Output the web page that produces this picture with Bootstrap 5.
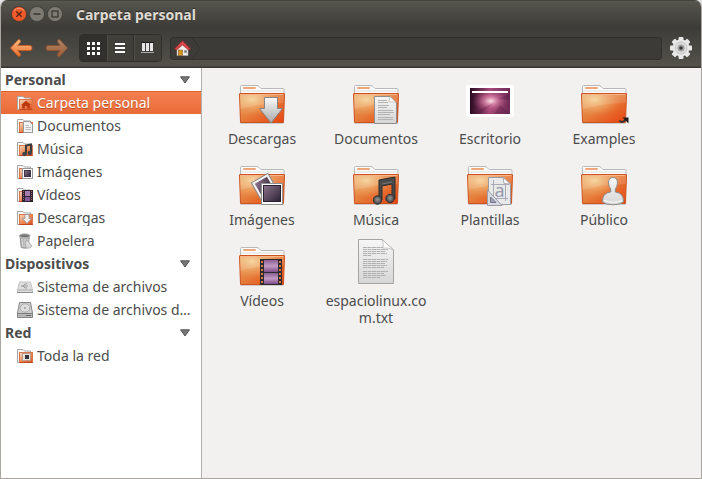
<!DOCTYPE html>
<html lang="es">
<head>
<meta charset="utf-8">
<meta name="viewport" content="width=device-width, initial-scale=1">
<title>Carpeta personal</title>
<link rel="stylesheet" href="https://cdn.jsdelivr.net/npm/bootstrap@5.3.0/dist/css/bootstrap.min.css">
<style>
body { background: #e4e4e4; color: #4c4c4c; font: 14px/17px "Noto Sans", "Open Sans", sans-serif; }
.window { border: 1px solid #a9a5a0; border-top: 0; border-radius: 7px 7px 0 0; overflow: hidden; background: #f2f1f0; }
.chrome { margin: 0 -1px; background: linear-gradient(#2f2e2a 0, #5b5a53 1px, #54534c 3px, #3c3b37 28px, #3e3d39 29px, #53514a 66px, #36352f 67px); }
.titlebar { height: 28px; padding: 0 11px; gap: 2px; }
.titlebar h1 { color: #dfdbd2; font-size: 14px; line-height: 17px; padding-left: 11px; text-shadow: 0 -1px #2c2b28; }
.window button { border: 0; padding: 0; background: none; color: inherit; }
.window svg { display: block; flex: none; }
.toolbar { height: 40px; padding: 0 10px 0 9px; }
.history { gap: 12px; margin-right: 10px; }
.window .views { border: 1px solid #2f2e2b; border-radius: 4px; overflow: hidden; }
.window .views button { width: 27px; height: 26px; background: #403f3a; border-left: 1px solid #504e48; }
.window .views button + button { box-shadow: -1px 0 #2f2e2b; }
.window .views button.active { background: #31302d; border-left-color: #31302d; }
.pathbar { height: 23px; border: 1px solid #30302c; border-radius: 3px; background: #3c3b37; box-shadow: 0 1px #56544c; padding-left: 3px; gap: 1px; }
.places { width: 201px; background: #fff; border-right: 1px solid #b4b0ac; }
.places h2 { font-size: 14px; line-height: 17px; height: 23px; padding: 0 11px 0 4px; margin: 0; }
.places a { height: 23px; padding: 0 4px 0 16px; gap: 4px; color: inherit; }
.places a.active { color: #fff; background: linear-gradient(#f58052, #e86b38); box-shadow: inset 0 1px #e0612e; text-shadow: 0 1px #b9522a; }
.files { display: grid; grid-template-columns: repeat(auto-fill, 114px); align-content: start; row-gap: 11px; padding: 9px 3px; }
.files a { color: inherit; gap: 5px; padding: 0 4px; }
.files span { max-width: 106px; word-break: break-all; }
</style>
<script src="https://cdn.jsdelivr.net/npm/bootstrap@5.3.0/dist/js/bootstrap.bundle.min.js"></script>
</head>
<body>
<svg width="0" height="0" class="position-absolute" aria-hidden="true">
  <defs>
    <linearGradient id="gBody" x1="0" y1="0" x2="1" y2="1"><stop offset="0" stop-color="#e9a766"/><stop offset=".45" stop-color="#e5803d"/><stop offset="1" stop-color="#e8420f"/></linearGradient>
    <radialGradient id="gGlow" cx=".28" cy=".2" r=".6"><stop offset="0" stop-color="#f8dba0" stop-opacity=".85"/><stop offset="1" stop-color="#f3a868" stop-opacity="0"/></radialGradient>
    <linearGradient id="gPaper" x1="0" y1="0" x2="0" y2="1"><stop offset="0" stop-color="#f6f6f6"/><stop offset="1" stop-color="#d6d6d6"/></linearGradient>
    <linearGradient id="gMetal" x1="0" y1="0" x2="0" y2="1"><stop offset="0" stop-color="#fafafa"/><stop offset="1" stop-color="#a9a9a9"/></linearGradient>
    <linearGradient id="gPhoto" x1="0" y1="0" x2="1" y2="1"><stop offset="0" stop-color="#8d748c"/><stop offset="1" stop-color="#2b2133"/></linearGradient>
    <linearGradient id="gFilm" x1="0" y1="0" x2="0" y2="1"><stop offset="0" stop-color="#8a5f92"/><stop offset=".5" stop-color="#c39ac4"/><stop offset="1" stop-color="#7c4c88"/></linearGradient>
    <linearGradient id="gSmall" x1="0" y1="0" x2="1" y2="1"><stop offset="0" stop-color="#f9dcc4"/><stop offset=".5" stop-color="#ec8c58"/><stop offset="1" stop-color="#dc4a1c"/></linearGradient>
    <linearGradient id="gArrow" x1="0" y1="0" x2="0" y2="1"><stop offset="0" stop-color="#fbc08a"/><stop offset="1" stop-color="#ec6a28"/></linearGradient>
    <linearGradient id="gWall" x1="0" y1="0" x2="1" y2="0"><stop offset="0" stop-color="#2a0a20"/><stop offset=".5" stop-color="#a8487a"/><stop offset="1" stop-color="#6d2a55"/></linearGradient>
    <radialGradient id="gShine" cx=".52" cy=".5" r=".45"><stop offset="0" stop-color="#fbe3e8"/><stop offset=".4" stop-color="#dd86a9" stop-opacity=".7"/><stop offset="1" stop-color="#a04070" stop-opacity="0"/></radialGradient>
    <radialGradient id="gBall" cx=".5" cy=".45" r=".5"><stop offset="0" stop-color="#999"/><stop offset="1" stop-color="#444"/></radialGradient>
  </defs>
  <symbol id="folder" viewBox="0 0 48 48">
    <rect x="2" y="44" width="44" height="3" rx="1" fill="#000" opacity=".15"/>
    <path d="M2.500 18V9.500q0-1 1-1H19q1 0 2 1l2 2H45q1 0 1 1V18z" fill="#fbfbfb" stroke="#b9b9b9"/>
    <rect x="5" y="10" width="13" height="2" rx="1" fill="#efa678"/>
    <path d="M3 14H45" stroke="#dedede"/>
    <path d="M1.500 17q0-.5.5-.5H46q.5 0 .5.5L45.500 45q0 .5-.5.5H3q-.5 0-.5-.5z" fill="url(#gBody)" stroke="#cd5220"/>
    <path d="M2 17H46L45 45H3z" fill="url(#gGlow)"/>
    <path d="M2.500 17.500H45.500" stroke="#f5b88c"/>
    <path d="M2 18H46L45.700 26Q24 26 2.400 32z" fill="#fff" opacity=".12"/>
  </symbol>
  <symbol id="place" viewBox="0 0 16 16">
    <path d="M.5 14.500V1.500H6L7.500 3H13.500V6H3V14.500z" fill="#f9f9f9" stroke="#a5a5a5"/>
    <rect x="2.500" y="4.500" width="13" height="10" fill="url(#gSmall)" stroke="#d9764c"/>
    <path d="M2.500 14.500H15.500" stroke="#c4451a"/>
  </symbol>
  <symbol id="tri" viewBox="0 0 10 8"><path d="M.5 .8H9.500L5 7z" fill="#777" stroke="#555"/></symbol>
</svg>

<div class="window d-flex flex-column min-vh-100">
  <header class="chrome">
    <div class="titlebar d-flex align-items-center">
      <button type="button" aria-label="Cerrar"><svg width="16" height="16" viewBox="0 0 16 16"><circle cx="8" cy="8" r="7.500" fill="#ee5a2a" stroke="#2e2d29" stroke-width=".6"/><path d="M3 4.500Q8 0 13 4.500" fill="none" stroke="#f79a75"/><path d="M5.300 5.500L10.700 10.700M10.700 5.500L5.300 10.700" stroke="#5a2413" stroke-width="1.300"/></svg></button>
      <button type="button" aria-label="Minimizar"><svg width="16" height="16" viewBox="0 0 16 16"><circle cx="8" cy="8" r="7.500" fill="#7c7a72" stroke="#33322e" stroke-width=".6"/><path d="M4.500 8H11.500" stroke="#34332f" stroke-width="1.400"/></svg></button>
      <button type="button" aria-label="Maximizar"><svg width="16" height="16" viewBox="0 0 16 16"><circle cx="8" cy="8" r="7.500" fill="#7c7a72" stroke="#33322e" stroke-width=".6"/><rect x="5" y="5" width="6" height="6" fill="none" stroke="#34332f" stroke-width="1.200"/></svg></button>
      <h1 class="fw-bold mb-0">Carpeta personal</h1>
    </div>
    <div class="toolbar d-flex align-items-center">
      <div class="history d-flex">
        <button type="button" aria-label="Atrás"><svg width="24" height="20" viewBox="0 0 24 20"><path d="M1.500 10L9.500 1.500Q12 1.500 11.500 4L8.700 7.500H21Q23 7.500 23 10T21 12.500H8.700L11.500 16Q12 18.500 9.500 18.500z" fill="url(#gArrow)" stroke="#c95a20" stroke-width=".8"/></svg></button>
        <button type="button" aria-label="Adelante" disabled><svg width="24" height="20" viewBox="0 0 24 20" opacity=".55"><path d="M22.500 10L14.500 1.500Q12 1.500 12.500 4L15.300 7.500H3Q1 7.500 1 10T3 12.500H15.300L12.500 16Q12 18.500 14.500 18.500z" fill="url(#gArrow)" stroke="#c95a20" stroke-width=".8"/></svg></button>
      </div>
      <div class="views d-flex me-2" role="group" aria-label="Vista">
        <button type="button" class="active" aria-label="Iconos"><svg class="mx-auto" width="14" height="14" viewBox="0 0 14 14" fill="#fff"><path d="M0 1h3v3H0zM5 1h3v3H5zM10 1h3v3h-3zM0 6h3v3H0zM5 6h3v3H5zM10 6h3v3h-3zM0 11h3v3H0zM5 11h3v3H5zM10 11h3v3h-3z"/></svg></button>
        <button type="button" aria-label="Lista"><svg class="mx-auto" width="12" height="12" viewBox="0 0 12 12" fill="#fff"><path d="M0 1h10v2H0zM0 5h10v2H0zM0 9h10v2H0z"/></svg></button>
        <button type="button" aria-label="Compacta"><svg class="mx-auto" width="14" height="12" viewBox="0 0 14 12"><path d="M0 .5h13" stroke="#1d1c1a"/><path d="M1 1h3v8H1zM5 1h3v8H5zM9 1h3v8H9z" fill="#e6e6e6"/><path d="M0 10.500h13" stroke="#aaa"/></svg></button>
      </div>
      <nav class="pathbar d-flex align-items-center flex-grow-1 me-2" aria-label="Ruta">
        <a href="#" aria-label="Carpeta personal"><svg width="17" height="17" viewBox="0 0 17 17"><path d="M3 8L8.500 3L14 8V15.500H3z" fill="#f1efed" stroke="#aaa" stroke-width=".6"/><path d="M.5 9L8.500 .8L16.500 9L14.500 10L8.500 5L2.500 10z" fill="#d8474a" stroke="#a1282d" stroke-width=".7"/><rect x="4.500" y="10" width="4" height="5.500" fill="#d9941e" stroke="#805a1c" stroke-width=".6"/><rect x="10" y="10" width="3" height="3" fill="#777" stroke="#ddd" stroke-width=".6"/></svg></a>
        <svg width="10" height="21" viewBox="0 0 10 21" fill="none"><path d="M1 0L8.500 10.500L1 21" stroke="#302f2c"/><path d="M2 0L9.500 10.500L2 21" stroke="#474640" stroke-width=".7"/></svg>
      </nav>
      <button type="button" aria-label="Opciones"><svg width="22" height="22" viewBox="0 0 22 22"><g fill="#e8e8e8"><rect x="8.500" y="0" width="5" height="22" rx="1"/><rect x="0" y="8.500" width="22" height="5" rx="1"/><rect x="8.500" y="0" width="5" height="22" rx="1" transform="rotate(45 11 11)"/><rect x="8.500" y="0" width="5" height="22" rx="1" transform="rotate(-45 11 11)"/><circle cx="11" cy="11" r="8.500"/></g><circle cx="11" cy="11" r="6" fill="#dcdcdc" stroke="#c6c6c6"/><circle cx="11" cy="11" r="3.500" fill="#a2a2a2"/><circle cx="11" cy="11" r="1.800" fill="#3d3c38"/></svg></button>
    </div>
  </header>

  <div class="d-flex flex-grow-1">
    <nav class="places flex-shrink-0" aria-label="Lugares">
      <h2 class="fw-bold d-flex align-items-center justify-content-between">Personal <svg width="10" height="8"><use href="#tri"/></svg></h2>
      <a href="#" class="active d-flex align-items-center text-decoration-none" aria-current="page"><svg width="16" height="16"><use href="#place"/><path d="M4 10L9 5.800L14 10H12.800V13.500H10.200V11H7.800V13.500H5.200V10z" fill="#bd3810"/></svg><span class="text-truncate">Carpeta personal</span></a>
      <a href="#" class="d-flex align-items-center text-decoration-none"><svg width="16" height="16"><use href="#place"/><path d="M6.500 3.500H12.500L15.500 6.500V14.500H6.500z" fill="#f3f3f3" stroke="#999"/><path d="M8.500 7.500H12M8.500 9.500H14M8.500 11.500H14" stroke="#bbb"/></svg><span class="text-truncate">Documentos</span></a>
      <a href="#" class="d-flex align-items-center text-decoration-none"><svg width="16" height="16"><use href="#place"/><path d="M9 13V4.500L14 3.500V12" fill="none" stroke="#3b3b3b" stroke-width="2"/><circle cx="7.500" cy="13" r="2.200" fill="#444"/><circle cx="12.800" cy="12" r="2.200" fill="#444"/></svg><span class="text-truncate">Música</span></a>
      <a href="#" class="d-flex align-items-center text-decoration-none"><svg width="16" height="16"><use href="#place"/><rect x="5.500" y="4.500" width="10" height="10" fill="#fff" stroke="#999"/><rect x="7.500" y="6.500" width="6" height="6" fill="url(#gPhoto)" stroke="#40334a"/></svg><span class="text-truncate">Imágenes</span></a>
      <a href="#" class="d-flex align-items-center text-decoration-none"><svg width="16" height="16"><use href="#place"/><rect x="5" y="3" width="11" height="12" fill="#2b2430"/><rect x="8" y="4" width="5" height="5" fill="#a57bab"/><rect x="8" y="10" width="5" height="4" fill="#87589a"/><path d="M6.500 4V14M14.500 4V14" stroke="#a66" stroke-dasharray="1 1"/></svg><span class="text-truncate">Vídeos</span></a>
      <a href="#" class="d-flex align-items-center text-decoration-none"><svg width="16" height="16"><use href="#place"/><path d="M8 4.500H12V8.500H14.500L10 13.500L5.500 8.500H8z" fill="#eee" stroke="#999" stroke-width=".8"/></svg><span class="text-truncate">Descargas</span></a>
      <a href="#" class="d-flex align-items-center text-decoration-none"><svg width="16" height="16" viewBox="0 0 16 16"><path d="M3 3L4.200 14.500Q8 16 10.800 14.500L12.500 3z" fill="#b4b4b4" stroke="#888" stroke-width=".8"/><ellipse cx="7.700" cy="2.800" rx="5.500" ry="2" fill="#777" stroke="#bbb"/><path d="M5 6L6 14M8 6V14M11 6L10 14" stroke="#dcdcdc"/><path d="M8 9Q11 6 12.500 10L15 13Q13 16 9 15z" fill="#d9d9d9" stroke="#999" stroke-width=".7"/></svg><span class="text-truncate">Papelera</span></a>
      <h2 class="fw-bold d-flex align-items-center justify-content-between">Dispositivos <svg width="10" height="8"><use href="#tri"/></svg></h2>
      <a href="#" class="d-flex align-items-center text-decoration-none"><svg width="16" height="16" viewBox="0 0 16 16"><path d="M2.500 3H13.500L15.500 11V13.500H.5V11z" fill="#dedede" stroke="#c2c2c2"/><path d="M0 13.500H16" stroke="#8d8d8d"/><path d="M1 11H15" stroke="#aaa"/><path d="M4 7H11M6 7L8 5H10M6 7L8 9H10" fill="none" stroke="#999"/></svg><span class="text-truncate">Sistema de archivos</span></a>
      <a href="#" class="d-flex align-items-center text-decoration-none"><svg width="16" height="16" viewBox="0 0 16 16"><path d="M2.500 .5H13.500L15.500 11V15.500H.5V11z" fill="#cfcfcf" stroke="#858585"/><ellipse cx="8" cy="6" rx="4.800" ry="4.200" fill="#dedede" stroke="#aaa"/><circle cx="8" cy="6" r="1" fill="#999"/><path d="M1 11.500H15" stroke="#777"/><path d="M1 13.500H15" stroke="#aaa" stroke-width="2"/><path d="M9 13.500H14" stroke="#666"/></svg><span class="text-truncate">Sistema de archivos d…</span></a>
      <h2 class="fw-bold d-flex align-items-center justify-content-between">Red <svg width="10" height="8"><use href="#tri"/></svg></h2>
      <a href="#" class="d-flex align-items-center text-decoration-none"><svg width="16" height="16"><use href="#place"/><rect x="5.500" y="5.500" width="8" height="7" fill="#e5e2df" stroke="#b98"/><rect x="8" y="7" width="4" height="4" fill="#333"/></svg><span class="text-truncate">Toda la red</span></a>
    </nav>

    <main class="files flex-grow-1 text-center">
      <a href="#" class="d-flex flex-column align-items-center text-decoration-none"><svg width="48" height="48"><use href="#folder"/><path d="M26.500 20.500H39.500V31.500H44.500L33 46L21.500 31.500H26.500z" fill="url(#gMetal)" stroke="#858585"/></svg><span>Descargas</span></a>
      <a href="#" class="d-flex flex-column align-items-center text-decoration-none"><svg width="48" height="48"><use href="#folder"/><path d="M22.500 19.500H38L44.500 26V46.500H22.500z" fill="url(#gPaper)" stroke="#8e8e8e"/><path d="M38 19.500L37 25Q40 24 44.500 26z" fill="#fff" stroke="#aaa" stroke-width=".6"/><path d="M26 23.500H35M26 25.500H36M26 28.500H37M26 30.500H35M26 33.500H41M26 35.500H42M26 37.500H38M26 40.500H41M26 42.500H41" stroke="#b3b3b3"/></svg><span>Documentos</span></a>
      <a href="#" class="d-flex flex-column align-items-center text-decoration-none"><svg width="48" height="48"><rect y="8" width="48" height="32" rx="2" fill="#fff"/><rect x="4" y="11" width="40" height="26" fill="url(#gWall)"/><rect x="4" y="11" width="40" height="26" fill="url(#gShine)"/><path d="M4 37L28 26L14 37zM44 17L32 22L44 23zM28 37L34 28L44 37z" fill="#4a1238" opacity=".25"/><path d="M6 15H42" stroke="#fff" stroke-width="2"/></svg><span>Escritorio</span></a>
      <a href="#" class="d-flex flex-column align-items-center text-decoration-none"><svg width="50" height="48" viewBox="-1 0 50 48"><use href="#folder" width="48" height="48"/><path d="M39.500 43.500Q41.500 46.500 45.500 43" fill="none" stroke="#333" stroke-width="2"/><path d="M42.500 40.500H48.500V46.500z" fill="#1c1c1c"/></svg><span>Examples</span></a>
      <a href="#" class="d-flex flex-column align-items-center text-decoration-none"><svg width="48" height="48"><use href="#folder"/><g transform="rotate(-30 25 28)"><rect x="16.500" y="19.500" width="19" height="19" fill="#f2f2f2" stroke="#888"/><rect x="19" y="22" width="14" height="14" fill="url(#gPhoto)"/></g><rect x="23.500" y="25.500" width="21" height="21" fill="#fafafa" stroke="#8f8f8f"/><rect x="25.500" y="27.500" width="17" height="16" fill="url(#gPhoto)" stroke="#272030"/></svg><span>Imágenes</span></a>
      <a href="#" class="d-flex flex-column align-items-center text-decoration-none"><svg width="48" height="48"><use href="#folder"/><path d="M27 22L43 19V41H40V26L30 28V42H27z" fill="#4a4a4a" stroke="#2d2d2d"/><path d="M30 26L40 24" stroke="#777"/><circle cx="25.500" cy="42" r="4.200" fill="url(#gBall)" stroke="#333"/><circle cx="38" cy="40.500" r="4.200" fill="url(#gBall)" stroke="#333"/></svg><span>Música</span></a>
      <a href="#" class="d-flex flex-column align-items-center text-decoration-none"><svg width="48" height="48"><use href="#folder"/><path d="M22.500 19.500H37L44.500 26V46.500H22.500z" fill="#e9e9ea" stroke="#9a9aa0"/><path d="M37 19.500L38 25.500L44.500 26z" fill="#fff" stroke="#a9a9ae"/><path d="M27.500 22V38M25 26.500H43M39.500 27V43M30 40.500H42" stroke="#a9abb8"/><text x="33.500" y="39" text-anchor="middle" font-size="18" fill="#989bad">a</text><path d="M21.500 32V47.500H36z" fill="#d8d9e0" stroke="#9a9cab"/><path d="M24.500 39V44.500H30z" fill="#a0a3b5" stroke="#787b90"/></svg><span>Plantillas</span></a>
      <a href="#" class="d-flex flex-column align-items-center text-decoration-none"><svg width="48" height="48"><use href="#folder"/><path d="M33 19.500Q37.500 19.500 37.500 25Q37 29 35.300 31V34Q44 35 43.500 44Q40 46.800 33 46.800T22.500 44Q22 35 30.700 34V31Q29 29 28.500 25Q28.500 19.500 33 19.500z" fill="url(#gPaper)" stroke="#8c8c8c"/><path d="M24 42.500Q33 46 42 42.500" fill="none" stroke="#fff"/></svg><span>Público</span></a>
      <a href="#" class="d-flex flex-column align-items-center text-decoration-none"><svg width="48" height="48"><use href="#folder"/><rect x="22" y="20" width="22" height="26" fill="#2c2a2c"/><rect x="26" y="21" width="14" height="12" fill="url(#gFilm)"/><rect x="26" y="34" width="14" height="11" fill="url(#gFilm)"/><path d="M24 22V46M42 22V46" stroke="#d67a4c" stroke-width="2" stroke-dasharray="2 2"/></svg><span>Vídeos</span></a>
      <a href="#" class="d-flex flex-column align-items-center text-decoration-none"><svg width="48" height="48"><path d="M6.500 .5H30L41.500 11V44.500H6.500z" fill="url(#gPaper)" stroke="#a4a4a4"/><path d="M30 .5Q32 5 31 9Q36 8 41.500 11z" fill="#fff" stroke="#b5b5b5" stroke-width=".7"/><path d="M11 8.500H31M11 10.500H36M11 12.500H34M11 14.500H35M11 16.500H19M11 20.500H36M11 22.500H35M11 24.500H33M11 26.500H35M11 28.500H32M11 32.500H36M11 34.500H32M11 36.500H34M11 38.500H28" stroke="#b0b0b0" stroke-dasharray="4 .5"/></svg><span>espaciolinux.com.txt</span></a>
    </main>
  </div>
</div>
</body>
</html>
